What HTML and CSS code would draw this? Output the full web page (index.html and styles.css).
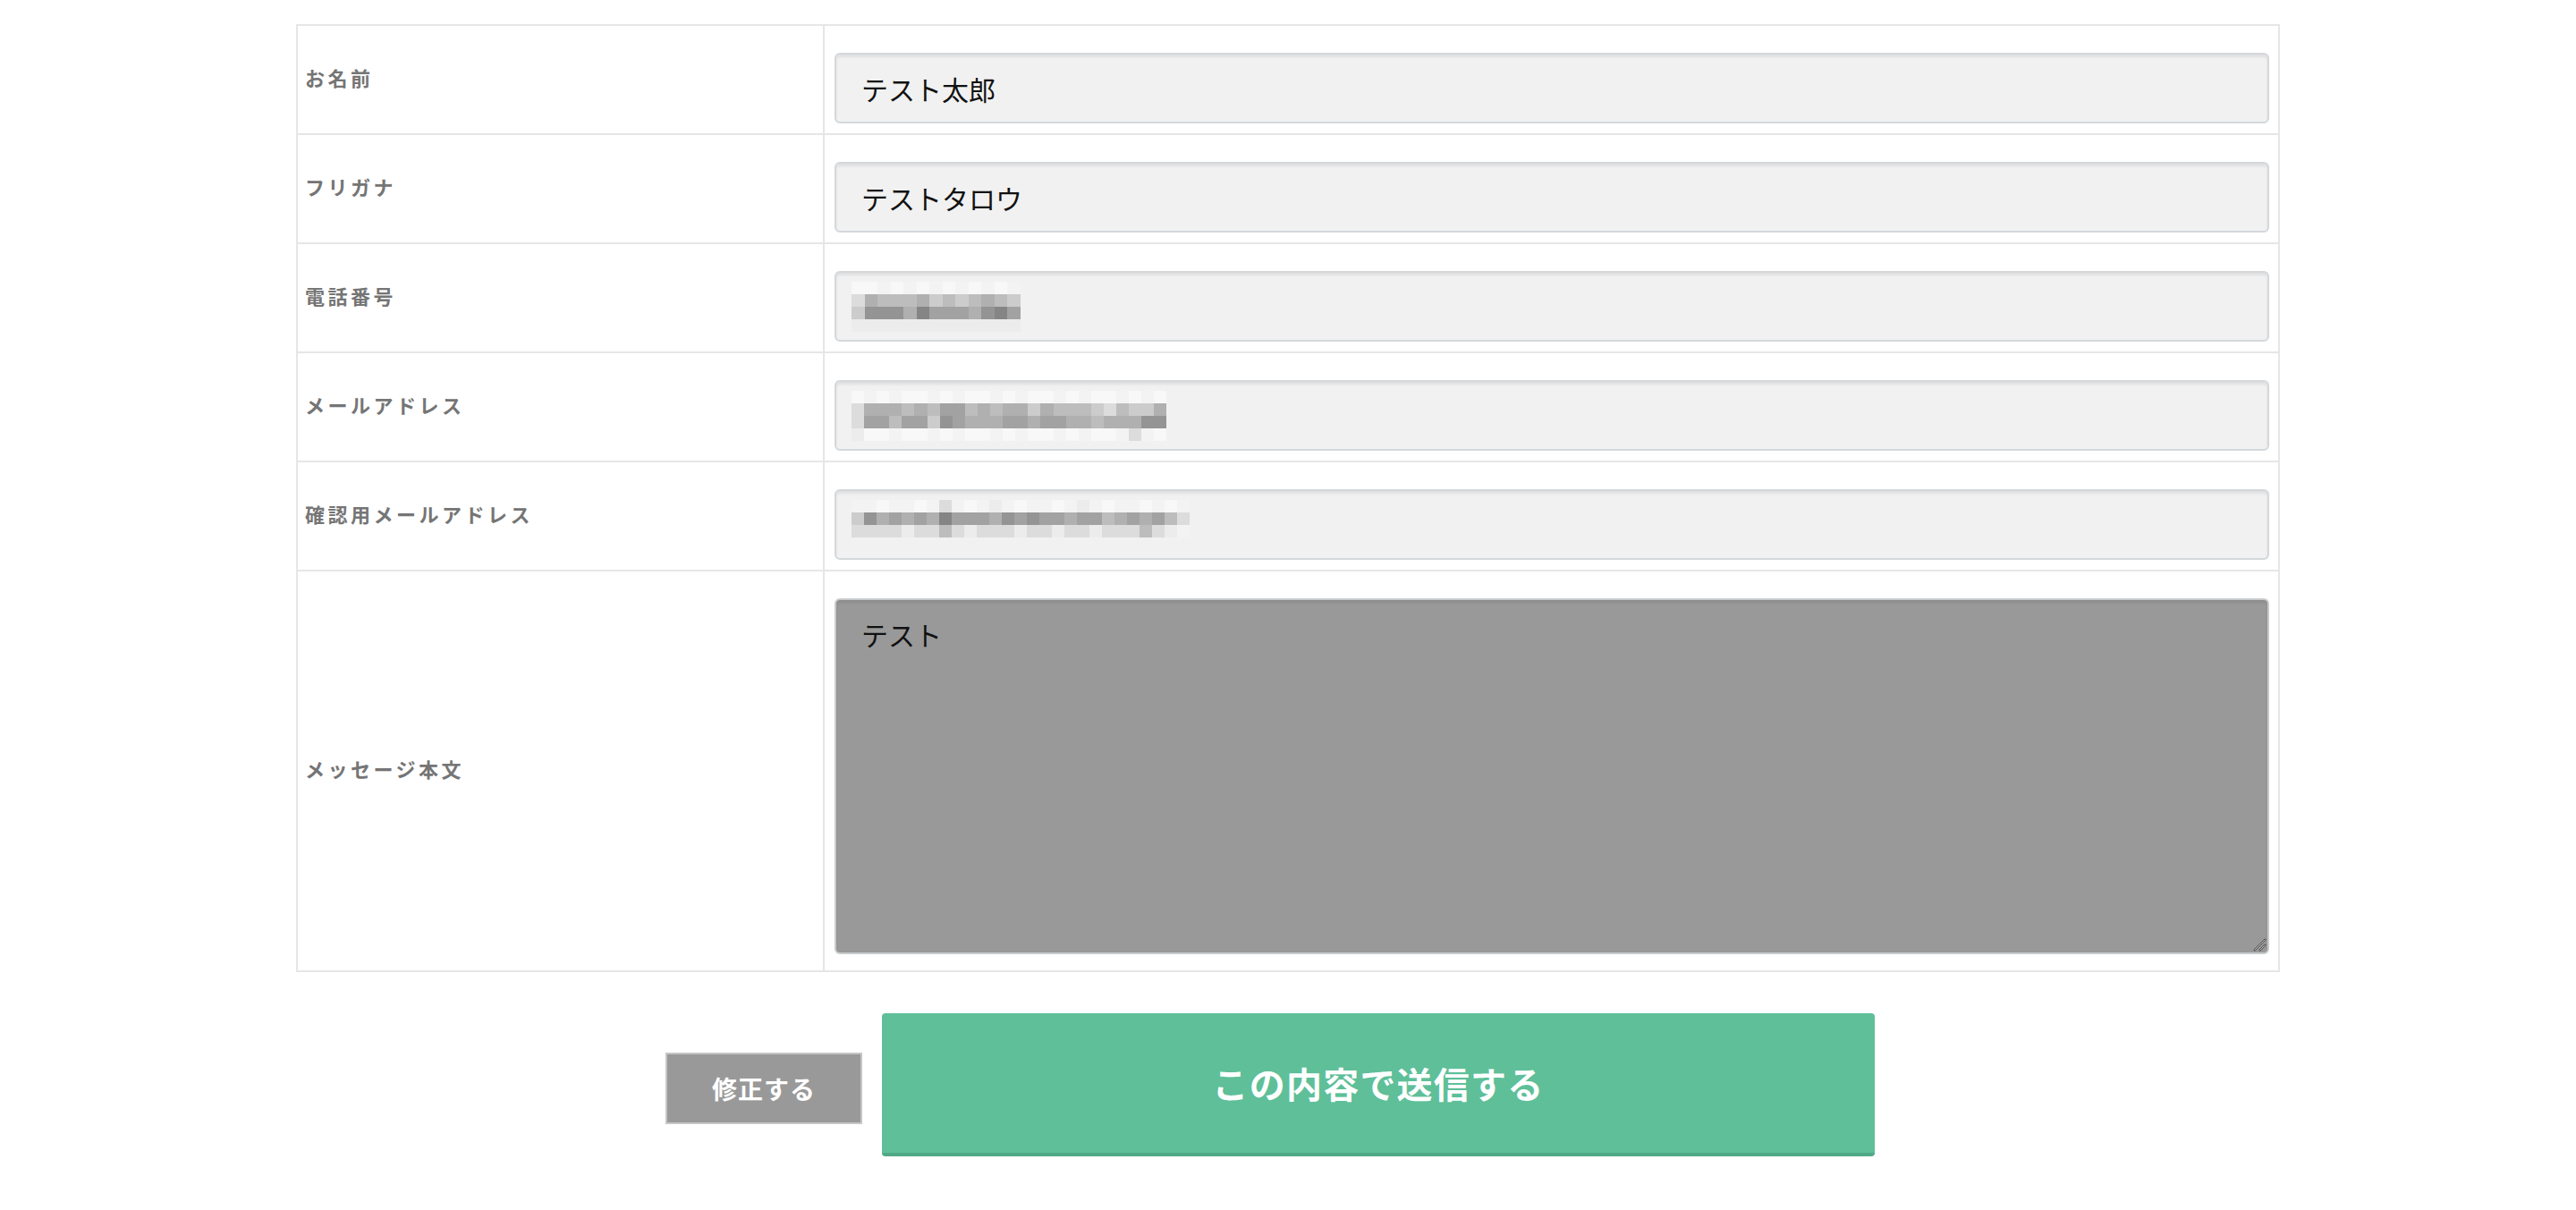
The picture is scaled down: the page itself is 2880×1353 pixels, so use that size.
FILE: index.html
```html
<!DOCTYPE html>
<html lang="ja">
<head>
<meta charset="utf-8">
<title>確認画面</title>
<link rel="stylesheet" href="styles.css">
</head>
<body>
<main class="page">
  <table class="form-table">
    <colgroup><col class="col-label"><col class="col-field"></colgroup>
    <tr>
      <th>お名前</th>
      <td><div class="field">テスト太郎</div></td>
    </tr>
    <tr>
      <th>フリガナ</th>
      <td><div class="field">テストタロウ</div></td>
    </tr>
    <tr>
      <th>電話番号</th>
      <td><div class="field">
        <div class="mosaic mz-phone">
          <i class="w"></i><i class="w"></i><i class="x"></i><i class="w"></i><i class="x"></i><i class="w"></i><i class="x"></i><i class="w"></i><i class="x"></i><i class="w"></i><i class="x"></i><i class="w"></i><i class="x"></i>
          <i class="g2"></i><i class="g5"></i><i class="g4"></i><i class="g4"></i><i class="g4"></i><i class="g5"></i><i class="g3"></i><i class="g4"></i><i class="g3"></i><i class="g4"></i><i class="g5"></i><i class="g4"></i><i class="g3"></i>
          <i class="g3"></i><i class="g7"></i><i class="g7"></i><i class="g7"></i><i class="g5"></i><i class="g8"></i><i class="g6"></i><i class="g6"></i><i class="g6"></i><i class="g5"></i><i class="g7"></i><i class="g8"></i><i class="g6"></i>
          <i class="g1"></i><i class="g1"></i><i class="g1"></i><i class="g1"></i><i class="g1"></i><i class="g1"></i><i class="g1"></i><i class="g1"></i><i class="g1"></i><i class="g1"></i><i class="g1"></i><i class="g1"></i><i class="g1"></i>
        </div>
      </div></td>
    </tr>
    <tr>
      <th>メールアドレス</th>
      <td><div class="field">
        <div class="mosaic mz-mail">
          <i class="w"></i><i class="x"></i><i class="w"></i><i class="x"></i><i class="w"></i><i class="w"></i><i class="x"></i><i class="w"></i><i class="x"></i><i class="w"></i><i class="w"></i><i class="x"></i><i class="w"></i><i class="x"></i><i class="w"></i><i class="w"></i><i class="x"></i><i class="w"></i><i class="x"></i><i class="w"></i><i class="w"></i><i class="x"></i><i class="w"></i><i class="x"></i><i class="w"></i>
          <i class="g2"></i><i class="g5"></i><i class="g5"></i><i class="g5"></i><i class="g4"></i><i class="g5"></i><i class="g4"></i><i class="g6"></i><i class="g6"></i><i class="g4"></i><i class="g5"></i><i class="g4"></i><i class="g5"></i><i class="g5"></i><i class="g3"></i><i class="g5"></i><i class="g4"></i><i class="g4"></i><i class="g4"></i><i class="g3"></i><i class="g2"></i><i class="g4"></i><i class="g3"></i><i class="g3"></i><i class="g5"></i>
          <i class="g2"></i><i class="g6"></i><i class="g6"></i><i class="g4"></i><i class="g6"></i><i class="g6"></i><i class="g3"></i><i class="g7"></i><i class="g6"></i><i class="g5"></i><i class="g5"></i><i class="g5"></i><i class="g6"></i><i class="g6"></i><i class="g5"></i><i class="g6"></i><i class="g6"></i><i class="g5"></i><i class="g5"></i><i class="g4"></i><i class="g5"></i><i class="g5"></i><i class="g5"></i><i class="g7"></i><i class="g7"></i>
          <i class="g1"></i><i class="w"></i><i class="w"></i><i class="x"></i><i class="w"></i><i class="w"></i><i class="x"></i><i class="w"></i><i class="x"></i><i class="w"></i><i class="w"></i><i class="x"></i><i class="w"></i><i class="x"></i><i class="w"></i><i class="w"></i><i class="x"></i><i class="w"></i><i class="x"></i><i class="w"></i><i class="w"></i><i class="x"></i><i class="g2"></i><i class="x"></i><i class="w"></i>
        </div>
      </div></td>
    </tr>
    <tr>
      <th>確認用メールアドレス</th>
      <td><div class="field">
        <div class="mosaic mz-conf">
          <i class="x"></i><i class="x"></i><i class="w"></i><i class="x"></i><i class="x"></i><i class="w"></i><i class="x"></i><i class="g2"></i><i class="x"></i><i class="w"></i><i class="x"></i><i class="g1"></i><i class="x"></i><i class="w"></i><i class="x"></i><i class="x"></i><i class="w"></i><i class="x"></i><i class="g1"></i><i class="x"></i><i class="w"></i><i class="x"></i><i class="x"></i><i class="w"></i><i class="x"></i><i class="w"></i><i class="x"></i>
          <i class="g3"></i><i class="g7"></i><i class="g5"></i><i class="g6"></i><i class="g5"></i><i class="g6"></i><i class="g5"></i><i class="g8"></i><i class="g6"></i><i class="g6"></i><i class="g6"></i><i class="g5"></i><i class="g7"></i><i class="g6"></i><i class="g7"></i><i class="g6"></i><i class="g6"></i><i class="g5"></i><i class="g6"></i><i class="g6"></i><i class="g4"></i><i class="g5"></i><i class="g6"></i><i class="g5"></i><i class="g6"></i><i class="g4"></i><i class="g2"></i>
          <i class="g2"></i><i class="g2"></i><i class="g2"></i><i class="g2"></i><i class="g1"></i><i class="g2"></i><i class="g2"></i><i class="g4"></i><i class="g2"></i><i class="g1"></i><i class="g2"></i><i class="g2"></i><i class="g2"></i><i class="g1"></i><i class="g2"></i><i class="g2"></i><i class="g1"></i><i class="g2"></i><i class="g2"></i><i class="g1"></i><i class="g2"></i><i class="g2"></i><i class="g2"></i><i class="g4"></i><i class="g2"></i><i class="g1"></i><i class="x"></i>
        </div>
      </div></td>
    </tr>
    <tr class="row-message">
      <th>メッセージ本文</th>
      <td>
        <div class="message-wrap">
          <textarea class="message" readonly>テスト</textarea>
          <svg class="resizer" width="16" height="16" viewBox="0 0 16 16" aria-hidden="true">
            <line x1="2" y1="15" x2="15" y2="2" stroke="#444" stroke-width="2"/>
            <line x1="2.6" y1="14.4" x2="14.4" y2="2.6" stroke="#e8e8e8" stroke-width="0.8"/>
            <line x1="8" y1="15" x2="15" y2="8" stroke="#444" stroke-width="2"/>
            <line x1="8.6" y1="14.4" x2="14.4" y2="8.6" stroke="#e8e8e8" stroke-width="0.8"/>
          </svg>
        </div>
      </td>
    </tr>
  </table>

  <div class="actions">
    <button class="btn-back" type="button">修正する</button>
    <button class="btn-send" type="button">この内容で送信する</button>
  </div>
</main>
</body>
</html>
```

FILE: styles.css
```css
html, body {
  margin: 0;
  padding: 0;
  background: #ffffff;
}

body {
  font-family: "Noto Sans CJK JP", "Noto Sans", sans-serif;
  color: #222222;
}

.page {
  padding-top: 27px;
}

.form-table {
  width: 2218px;
  margin: 0 auto;
  border-collapse: collapse;
  table-layout: fixed;
  border: 2px solid #e6e6e6;
}

.col-label {
  width: 589px;
}

.form-table th,
.form-table td {
  border: 2px solid #e6e6e6;
}

.form-table th {
  text-align: left;
  vertical-align: middle;
  padding: 0 0 6px 8px;
  font-size: 22px;
  font-weight: 700;
  color: #757575;
  letter-spacing: 3.5px;
}

.form-table td {
  padding: 30px 10px 11px 11px;
  vertical-align: top;
}

.field {
  box-sizing: border-box;
  height: 79px;
  display: flex;
  align-items: center;
  padding: 0 28px;
  background: #f1f1f1;
  border: 2px solid #d4d8db;
  border-radius: 6px;
  box-shadow: inset 0 3px 3px rgba(0, 0, 0, 0.07);
  font-size: 30px;
  color: #111111;
}

.mosaic {
  display: grid;
  grid-template-rows: repeat(4, 14px);
  margin-left: -11px;
}

.mz-phone { grid-template-columns: repeat(13, 14.5px); }
.mz-mail { grid-template-columns: repeat(25, 14.1px); }
.mz-conf { grid-template-columns: repeat(27, 14px); }

.mosaic i { display: block; }
.mosaic .w { background: #f8f8f8; }
.mosaic .x { background: #f3f3f3; }
.mosaic .g1 { background: #ececec; }
.mosaic .g2 { background: #dcdcdc; }
.mosaic .g3 { background: #cccccc; }
.mosaic .g4 { background: #bdbdbd; }
.mosaic .g5 { background: #b0b0b0; }
.mosaic .g6 { background: #a2a2a2; }
.mosaic .g7 { background: #949494; }
.mosaic .g8 { background: #858585; }

.message-wrap {
  position: relative;
  margin-bottom: 7px;
}

.message {
  display: block;
  box-sizing: border-box;
  width: 100%;
  height: 398px;
  margin: 0;
  padding: 16px 28px;
  background: #999999;
  border: 2px solid #c9ccce;
  border-radius: 6px;
  box-shadow: inset 0 3px 3px rgba(0, 0, 0, 0.08);
  font-family: "Noto Sans CJK JP", "Noto Sans", sans-serif;
  font-size: 30px;
  line-height: 1.5;
  color: #111111;
  resize: none;
  outline: none;
}

.resizer {
  position: absolute;
  right: 3px;
  bottom: 3px;
}

.actions {
  display: flex;
  justify-content: center;
  align-items: center;
  gap: 22px;
  margin-top: 46px;
  padding-right: 40px;
}

.btn-back {
  box-sizing: border-box;
  width: 220px;
  height: 80px;
  margin-top: 8px;
  background: #999999;
  border: 2px solid #c6c6c6;
  border-radius: 0;
  color: #ffffff;
  font-family: "Noto Sans CJK JP", "Noto Sans", sans-serif;
  font-size: 28px;
  font-weight: 700;
  letter-spacing: 1px;
  padding: 0;
}

.btn-send {
  box-sizing: border-box;
  width: 1110px;
  height: 160px;
  background: #5ebf99;
  border: none;
  border-bottom: 4px solid #50a986;
  border-radius: 4px;
  color: #ffffff;
  font-family: "Noto Sans CJK JP", "Noto Sans", sans-serif;
  font-size: 40px;
  font-weight: 700;
  letter-spacing: 1.2px;
  padding: 0;
}
```
